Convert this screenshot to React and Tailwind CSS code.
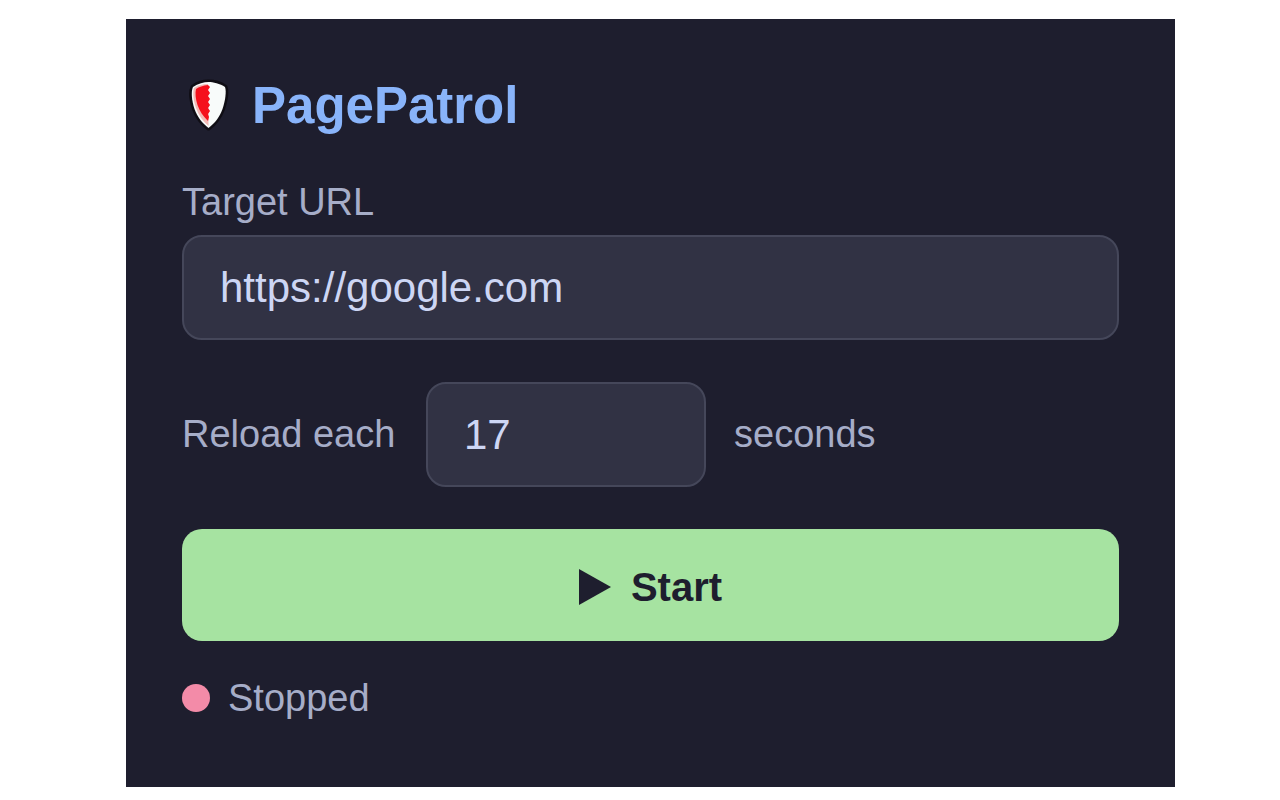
import React, { useState } from 'react';

const ShieldLogo = () => (
  <svg className="w-12 h-14 shrink-0" viewBox="0 0 48 56" aria-hidden="true">
    <path
      d="M26.500 4 C22 4 16 5.500 11 9 C9 13 9.500 22 12.500 31 C15.500 39 20 45 26.500 50 C33 45 37.500 39 40.500 31 C43.500 22 44.500 13 43 9 C38 5.500 31 4 26.500 4Z"
      fill="#f8fbfa"
      stroke="#0f0d14"
      strokeWidth="5"
      strokeLinejoin="round"
      paintOrder="stroke"
    />
    <path d="M12 10 C10.500 15 11.500 23 14 30 C16.500 37 20.500 43 26.500 48 L26 6 C20 6 15 8 12 10Z" fill="#f2b9b5" />
    <path
      d="M26 7 L28 9 L26 12 L28 15 L26 18 L28 21 L26 24 L28 27 L26 30 L28 33 L26 36 L27 39 L26 43 C21 38 17.500 33 15.500 27 C13.500 21 13 15 14 11 C17 9 21 7.500 26 7Z"
      fill="#f5101c"
    />
  </svg>
);

const App = () => {
  const [url, setUrl] = useState('https://google.com');
  const [seconds, setSeconds] = useState('17');
  const [running, setRunning] = useState(false);

  const handleSubmit = (e) => {
    e.preventDefault();
    setRunning(!running);
  };

  return (
    <div className="min-h-screen bg-white pt-[19px] pb-3 pl-[126px] pr-[105px] font-['Liberation_Sans',Arial,sans-serif]">
      <main className="bg-[#1e1e2e] px-14 pt-14 pb-16 text-[#a6adc8]">
        <h1 className="flex items-center gap-[22px] text-[51px] leading-[62px] font-bold text-[#89b4fa]">
          <ShieldLogo />
          PagePatrol
        </h1>

        <form onSubmit={handleSubmit}>
          <label htmlFor="url" className="mt-10 block text-[38px] leading-[50px]">
            Target URL
          </label>
          <input
            id="url"
            type="text"
            value={url}
            onChange={(e) => setUrl(e.target.value)}
            className="mt-2 h-[105px] w-full rounded-[20px] border-2 border-[#45475a] bg-[#313244] px-9 text-[42px] text-[#cdd6f4]"
          />

          <div className="mt-[42px] flex items-center gap-7 text-[38px]">
            <label htmlFor="seconds" className="w-[216px] whitespace-nowrap">
              Reload each
            </label>
            <input
              id="seconds"
              type="text"
              inputMode="numeric"
              value={seconds}
              onChange={(e) => setSeconds(e.target.value)}
              className="h-[105px] w-[280px] rounded-[20px] border-2 border-[#45475a] bg-[#313244] px-9 text-[42px] text-[#cdd6f4]"
            />
            <span>seconds</span>
          </div>

          <button
            type="submit"
            className="mt-[42px] flex h-28 w-full items-center justify-center gap-5 rounded-[20px] bg-[#a6e3a1] pt-1 text-[40px] font-bold text-[#1e1e2e]"
          >
            <svg className="h-9 w-8" viewBox="0 0 32 36" aria-hidden="true">
              <path d="M0 0 L32 18 L0 36Z" fill="currentColor" />
            </svg>
            {running ? 'Stop' : 'Start'}
          </button>
        </form>

        <p className="mt-8 flex items-center gap-[18px] text-[38px] leading-[50px]">
          <span className="h-7 w-7 rounded-full bg-[#f38ba8]" />
          {running ? 'Running' : 'Stopped'}
        </p>
      </main>
    </div>
  );
};

export default App;
